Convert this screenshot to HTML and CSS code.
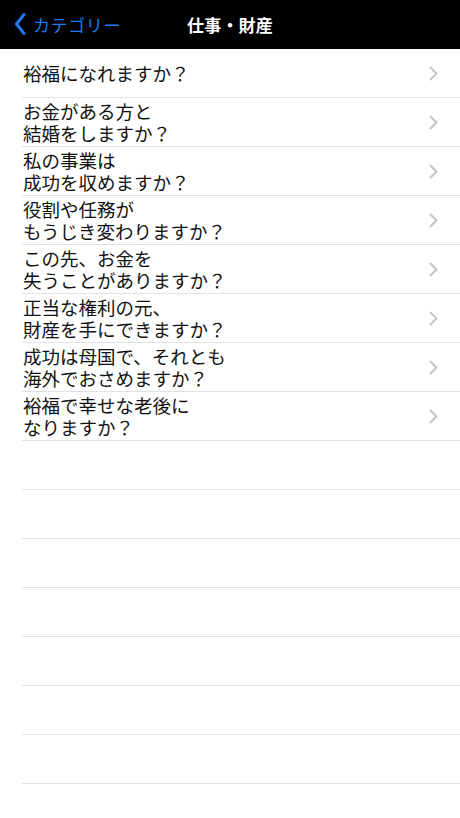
FILE: index.html
```html
<!DOCTYPE html>
<html lang="ja">
<head>
<meta charset="utf-8">
<title>仕事・財産</title>
<link rel="stylesheet" href="styles.css">
</head>
<body>
<header class="navbar">
  <a class="back">
    <svg class="back-icon" width="12" height="22" viewBox="0 0 12 22"><path d="M10 1.5 L2.5 11 L10 20.5" fill="none" stroke="#1b7cf4" stroke-width="3" stroke-linecap="round" stroke-linejoin="round"/></svg>
    <span class="back-label">カテゴリー</span>
  </a>
  <h1 class="title">仕事・財産</h1>
</header>
<ul class="list">
  <li class="row"><span class="text">裕福になれますか？</span><svg class="chev" width="9" height="15" viewBox="0 0 9 15"><path d="M1.5 1.5 L7.5 7.5 L1.5 13.5" fill="none" stroke="#c4c4c8" stroke-width="2" stroke-linecap="round" stroke-linejoin="round"/></svg></li>
  <li class="row"><span class="text">お金がある方と<br>結婚をしますか？</span><svg class="chev" width="9" height="15" viewBox="0 0 9 15"><path d="M1.5 1.5 L7.5 7.5 L1.5 13.5" fill="none" stroke="#c4c4c8" stroke-width="2" stroke-linecap="round" stroke-linejoin="round"/></svg></li>
  <li class="row"><span class="text">私の事業は<br>成功を収めますか？</span><svg class="chev" width="9" height="15" viewBox="0 0 9 15"><path d="M1.5 1.5 L7.5 7.5 L1.5 13.5" fill="none" stroke="#c4c4c8" stroke-width="2" stroke-linecap="round" stroke-linejoin="round"/></svg></li>
  <li class="row"><span class="text">役割や任務が<br>もうじき変わりますか？</span><svg class="chev" width="9" height="15" viewBox="0 0 9 15"><path d="M1.5 1.5 L7.5 7.5 L1.5 13.5" fill="none" stroke="#c4c4c8" stroke-width="2" stroke-linecap="round" stroke-linejoin="round"/></svg></li>
  <li class="row"><span class="text">この先、お金を<br>失うことがありますか？</span><svg class="chev" width="9" height="15" viewBox="0 0 9 15"><path d="M1.5 1.5 L7.5 7.5 L1.5 13.5" fill="none" stroke="#c4c4c8" stroke-width="2" stroke-linecap="round" stroke-linejoin="round"/></svg></li>
  <li class="row"><span class="text">正当な権利の元、<br>財産を手にできますか？</span><svg class="chev" width="9" height="15" viewBox="0 0 9 15"><path d="M1.5 1.5 L7.5 7.5 L1.5 13.5" fill="none" stroke="#c4c4c8" stroke-width="2" stroke-linecap="round" stroke-linejoin="round"/></svg></li>
  <li class="row"><span class="text">成功は母国で、それとも<br>海外でおさめますか？</span><svg class="chev" width="9" height="15" viewBox="0 0 9 15"><path d="M1.5 1.5 L7.5 7.5 L1.5 13.5" fill="none" stroke="#c4c4c8" stroke-width="2" stroke-linecap="round" stroke-linejoin="round"/></svg></li>
  <li class="row"><span class="text">裕福で幸せな老後に<br>なりますか？</span><svg class="chev" width="9" height="15" viewBox="0 0 9 15"><path d="M1.5 1.5 L7.5 7.5 L1.5 13.5" fill="none" stroke="#c4c4c8" stroke-width="2" stroke-linecap="round" stroke-linejoin="round"/></svg></li>
  <li class="row empty"></li>
  <li class="row empty"></li>
  <li class="row empty"></li>
  <li class="row empty"></li>
  <li class="row empty"></li>
  <li class="row empty"></li>
  <li class="row empty"></li>
</ul>
</body>
</html>
```
FILE: styles.css
```css
* { box-sizing: border-box; }
html, body {
  margin: 0;
  padding: 0;
  background: #ffffff;
  font-family: "Noto Sans CJK JP", "Noto Sans", sans-serif;
}
body { width: 460px; height: 818px; overflow: hidden; }

.navbar {
  position: relative;
  height: 49px;
  background: #000000;
  display: flex;
  align-items: center;
  justify-content: center;
}
.back {
  position: absolute;
  left: 14px;
  top: 0;
  height: 48px;
  display: flex;
  align-items: center;
  gap: 7px;
  color: #1b7cf4;
}
.back-icon { display: block; }
.back-label {
  font-size: 17px;
  line-height: 1;
  letter-spacing: 0.6px;
}
.title {
  margin: 0;
  color: #ffffff;
  font-size: 17px;
  font-weight: 700;
  line-height: 1;
  letter-spacing: 0.2px;
}

.list {
  list-style: none;
  margin: 0;
  padding: 0 0 0 22px;
}
.row {
  height: 49px;
  border-bottom: 1px solid #e2e2e4;
  display: flex;
  align-items: center;
  justify-content: space-between;
  padding-right: 22px;
}
.text {
  padding-left: 1px;
  font-size: 18.5px;
  line-height: 22.5px;
  color: #111111;
}
.chev { display: block; flex: none; }
```
